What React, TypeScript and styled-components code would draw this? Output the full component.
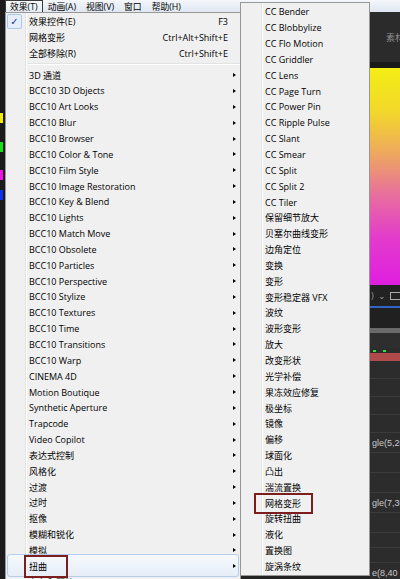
import React from 'react';
import styled, { createGlobalStyle, css } from 'styled-components';

const Global = createGlobalStyle`
  html, body { margin: 0; padding: 0; background: #1e1e1e; }
  body { font-family: "Open Sans", "Noto Sans CJK SC", sans-serif; }
`;

const FONT = `"Open Sans", "Noto Sans CJK SC", sans-serif`;

const Screen = styled.div`
  position: relative;
  width: 400px;
  height: 579px;
  overflow: hidden;
  display: flex;
  background: #1f1f1f;
  font-family: ${FONT};
`;

const LeftStrip = styled.div`
  width: 5px;
  flex: none;
  display: flex;
  flex-direction: column;
  background: #1b1b1b;
  padding-top: 113px;
  box-sizing: border-box;
`;

const Swatch = styled.div<{ $color: string; $gap: number }>`
  width: 3px;
  height: 10px;
  margin-top: ${(p) => p.$gap}px;
  background: ${(p) => p.$color};
`;

const MainCol = styled.div`
  flex: 1;
  display: flex;
  flex-direction: column;
  min-width: 0;
`;

const MenuBar = styled.div`
  height: 12px;
  flex: none;
  display: flex;
  align-items: stretch;
  background: linear-gradient(#f4f7fb, #dfe7f1);
  font-size: 8.8px;
  color: #000;
`;

const BarItem = styled.div<{ $open?: boolean }>`
  display: flex;
  align-items: center;
  padding: 0 4px;
  height: 13px;
  box-sizing: border-box;
  border: 1px solid transparent;
  white-space: nowrap;
  ${(p) =>
    p.$open &&
    css`
      border-color: #3a3a3a;
      background: linear-gradient(#f7f9fc, #e4ebf3);
    `}
`;

const Workspace = styled.div`
  flex: 1;
  display: flex;
  min-height: 0;
`;

const Middle = styled.div`
  flex: 1;
  background: #232323;
`;

const RightPanel = styled.div`
  width: 30px;
  flex: none;
  display: flex;
  flex-direction: column;
  background: #2a2a2a;
  overflow: hidden;
`;

const PanelHeader = styled.div`
  height: 50px;
  flex: none;
  display: flex;
  align-items: center;
  padding-left: 16px;
  background: #2b2b2b;
  border-bottom: 6px solid #191919;
  color: #8c8c8c;
  font-size: 9px;
  white-space: nowrap;
`;

const Preview = styled.div`
  height: 217px;
  flex: none;
  background: linear-gradient(
    #f4ee14 0%,
    #f2d82a 20%,
    #eea660 40%,
    #e8709c 58%,
    #e33ccb 78%,
    #df1ee0 100%
  );
`;

const ToolStrip = styled.div`
  height: 23px;
  flex: none;
  display: flex;
  align-items: center;
  gap: 4px;
  padding-left: 1px;
  background: #222;
  color: #9a9a9a;
  font-size: 9px;
  border-bottom: 2px solid #2f64c8;
  box-sizing: border-box;
  white-space: nowrap;
`;

const ViewBox = styled.span`
  width: 9px;
  height: 6px;
  border: 1px solid #aaa;
  flex: none;
`;

const DarkBand = styled.div<{ $h: number; $bg: string }>`
  height: ${(p) => p.$h}px;
  flex: none;
  background: ${(p) => p.$bg};
`;

const DotsBand = styled.div`
  height: 5px;
  flex: none;
  display: flex;
  align-items: center;
  gap: 7px;
  padding-left: 3px;
  background: #2c2c2c;
`;

const Dot = styled.span`
  width: 3px;
  height: 2px;
  background: #2ee03a;
`;

const LayerRow = styled.div<{ $h: number }>`
  height: ${(p) => p.$h}px;
  flex: none;
  display: flex;
  align-items: center;
  padding-left: 2px;
  background: #2c2c2c;
  border-bottom: 1px solid #3a3a3a;
  box-sizing: border-box;
  color: #c9c9c9;
  font-family: "Liberation Sans", sans-serif;
  font-size: 9px;
  white-space: nowrap;
`;

/* ---------- menus ---------- */

const Menu = styled.div<{
  $left: number;
  $top: number;
  $width: number;
  $height: number;
  $line: number;
}>`
  position: absolute;
  left: ${(p) => p.$left}px;
  top: ${(p) => p.$top}px;
  width: ${(p) => p.$width}px;
  height: ${(p) => p.$height}px;
  box-sizing: border-box;
  padding: 1px 0;
  background: #f0f0f0;
  border: 1px solid #979797;
  font-family: ${FONT};
  &::before {
    content: '';
    position: absolute;
    top: 0;
    bottom: 0;
    left: ${(p) => p.$line}px;
    width: 1px;
    background: #e2e3e3;
    border-right: 1px solid #ffffff;
  }
`;

const Row = styled.div<{ $gutter: number; $hover?: boolean }>`
  position: relative;
  height: 15.85px;
  display: grid;
  grid-template-columns: ${(p) => p.$gutter}px 1fr auto 8px;
  align-items: center;
  padding-right: 4px;
  font-size: 9px;
  line-height: 1;
  color: #000;
  white-space: nowrap;
  ${(p) =>
    p.$hover &&
    css`
      &::before {
        content: '';
        position: absolute;
        left: 1px;
        right: 1px;
        top: -4px;
        bottom: -3px;
        border: 1px solid #b4cdea;
        border-radius: 3px;
        background: linear-gradient(#f6f9fd, #e6eef8);
      }
    `}
`;

const Gutter = styled.span`
  position: relative;
  display: flex;
  align-items: center;
  height: 100%;
`;

const CheckBox = styled.span`
  margin-left: 1px;
  width: 15px;
  height: 15px;
  box-sizing: border-box;
  display: flex;
  align-items: center;
  justify-content: center;
  border: 1px solid #a9c9ec;
  border-radius: 2px;
  background: #e5eefa;
  color: #1b2f8e;
  font-family: "DejaVu Sans", sans-serif;
  font-size: 10px;
  font-weight: bold;
`;

const Label = styled.span`
  position: relative;
`;

const Mark = styled.span<{ $l: number; $r: number; $t: number; $b: number }>`
  position: relative;
  &::after {
    content: '';
    position: absolute;
    left: ${(p) => p.$l}px;
    right: ${(p) => p.$r}px;
    top: ${(p) => p.$t}px;
    bottom: ${(p) => p.$b}px;
    border: 2px solid #7d1e1e;
  }
`;

const Shortcut = styled.span`
  position: relative;
  text-align: right;
`;

const ArrowSlot = styled.span`
  position: relative;
  display: flex;
  justify-content: flex-end;
  align-items: center;
`;

const Arrow = styled.span`
  width: 0;
  height: 0;
  border-left: 3px solid #000;
  border-top: 2.5px solid transparent;
  border-bottom: 2.5px solid transparent;
`;

const Separator = styled.div`
  height: 5.7px;
  margin-left: 22px;
  display: flex;
  align-items: center;
  &::before {
    content: '';
    flex: 1;
    height: 1px;
    background: #e2e3e3;
    border-bottom: 1px solid #fff;
  }
`;

type Item = {
  label: string;
  shortcut?: string;
  checked?: boolean;
  sub?: boolean;
  hover?: boolean;
  mark?: { l: number; r: number; t: number; b: number };
};

const leftTop: Item[] = [
  { label: '效果控件(E)', shortcut: 'F3', checked: true },
  { label: '网格变形', shortcut: 'Ctrl+Alt+Shift+E' },
  { label: '全部移除(R)', shortcut: 'Ctrl+Shift+E' },
];

const leftCats: Item[] = [
  '3D 通道',
  'BCC10 3D Objects',
  'BCC10 Art Looks',
  'BCC10 Blur',
  'BCC10 Browser',
  'BCC10 Color & Tone',
  'BCC10 Film Style',
  'BCC10 Image Restoration',
  'BCC10 Key & Blend',
  'BCC10 Lights',
  'BCC10 Match Move',
  'BCC10 Obsolete',
  'BCC10 Particles',
  'BCC10 Perspective',
  'BCC10 Stylize',
  'BCC10 Textures',
  'BCC10 Time',
  'BCC10 Transitions',
  'BCC10 Warp',
  'CINEMA 4D',
  'Motion Boutique',
  'Synthetic Aperture',
  'Trapcode',
  'Video Copilot',
  '表达式控制',
  '风格化',
  '过渡',
  '过时',
  '抠像',
  '模糊和锐化',
  '模拟',
  '扭曲',
  '杂色和颗粒',
].map((label) =>
  label === '扭曲'
    ? { label, sub: true, hover: true, mark: { l: -5, r: -21, t: -5, b: -5 } }
    : { label, sub: true }
);

const subItems: Item[] = [
  'CC Bender',
  'CC Blobbylize',
  'CC Flo Motion',
  'CC Griddler',
  'CC Lens',
  'CC Page Turn',
  'CC Power Pin',
  'CC Ripple Pulse',
  'CC Slant',
  'CC Smear',
  'CC Split',
  'CC Split 2',
  'CC Tiler',
  '保留细节放大',
  '贝塞尔曲线变形',
  '边角定位',
  '变换',
  '变形',
  '变形稳定器 VFX',
  '波纹',
  '波形变形',
  '放大',
  '改变形状',
  '光学补偿',
  '果冻效应修复',
  '极坐标',
  '镜像',
  '偏移',
  '球面化',
  '凸出',
  '湍流置换',
  '网格变形',
  '旋转扭曲',
  '液化',
  '置换图',
  '旋涡条纹',
].map((label) =>
  label === '网格变形'
    ? { label, mark: { l: -11, r: -12, t: -4, b: -4 } }
    : { label }
);

const MenuRow: React.FC<{ item: Item; gutter: number }> = ({ item, gutter }) => (
  <Row $gutter={gutter} $hover={item.hover}>
    <Gutter>{item.checked && <CheckBox>✓</CheckBox>}</Gutter>
    <Label>
      {item.mark ? (
        <Mark $l={item.mark.l} $r={item.mark.r} $t={item.mark.t} $b={item.mark.b}>
          {item.label}
        </Mark>
      ) : (
        item.label
      )}
    </Label>
    <Shortcut>{item.shortcut}</Shortcut>
    <ArrowSlot>{item.sub && <Arrow />}</ArrowSlot>
  </Row>
);

const layerRows: { h: number; text?: string }[] = [
  { h: 18 },
  { h: 18 },
  { h: 18 },
  { h: 18 },
  { h: 20, text: 'gle(5,20' },
  { h: 20 },
  { h: 20 },
  { h: 20, text: 'gle(7,30' },
  { h: 20 },
  { h: 15 },
  { h: 15 },
  { h: 20, text: 'e(8,40' },
];

export default function App() {
  return (
    <>
      <Global />
      <Screen>
        <LeftStrip>
          <Swatch $color="#f2ec00" $gap={0} />
          <Swatch $color="#18e018" $gap={19} />
          <Swatch $color="#f010e8" $gap={18} />
          <Swatch $color="#1030f0" $gap={10} />
        </LeftStrip>
        <MainCol>
          <MenuBar>
            <BarItem $open>效果(T)</BarItem>
            <BarItem>动画(A)</BarItem>
            <BarItem>视图(V)</BarItem>
            <BarItem>窗口</BarItem>
            <BarItem>帮助(H)</BarItem>
          </MenuBar>
          <Workspace>
            <Middle />
            <RightPanel>
              <PanelHeader>素材</PanelHeader>
              <Preview />
              <ToolStrip>
                <span>)</span>
                <span>⌄</span>
                <ViewBox />
              </ToolStrip>
              <DarkBand $h={20} $bg="#202020" />
              <DarkBand $h={5} $bg="#6a6a6a" />
              <DarkBand $h={15} $bg="#2e2e2e" />
              <DotsBand>
                <Dot />
                <Dot />
              </DotsBand>
              <DarkBand $h={8} $bg="#b04a4a" />
              {layerRows.map((r, i) => (
                <LayerRow key={i} $h={r.h}>
                  {r.text}
                </LayerRow>
              ))}
            </RightPanel>
          </Workspace>
        </MainCol>

        <Menu $left={5} $top={12} $width={236} $height={600} $line={19}>
          {leftTop.map((it) => (
            <MenuRow key={it.label} item={it} gutter={23} />
          ))}
          <Separator />
          {leftCats.map((it) => (
            <MenuRow key={it.label} item={it} gutter={23} />
          ))}
        </Menu>

        <Menu $left={240} $top={2} $width={130} $height={574} $line={20}>
          {subItems.map((it) => (
            <MenuRow key={it.label} item={it} gutter={24} />
          ))}
        </Menu>
      </Screen>
    </>
  );
}
